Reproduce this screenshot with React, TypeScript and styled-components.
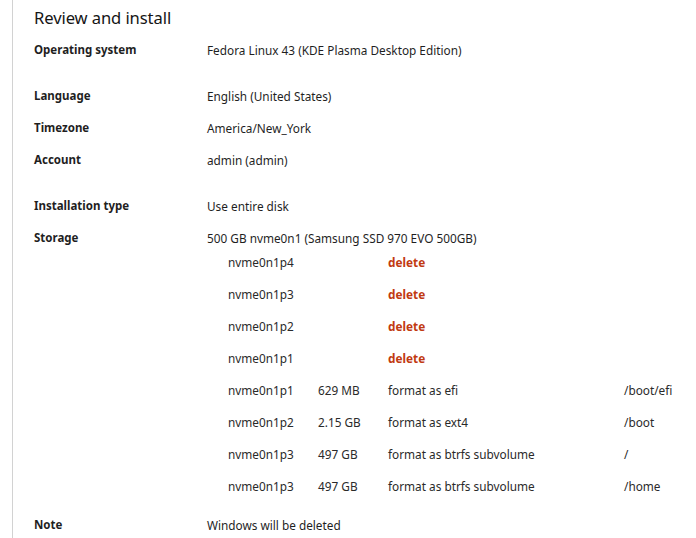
import React from "react";
import styled, { createGlobalStyle } from "styled-components";

const Global = createGlobalStyle`
  html, body { margin: 0; padding: 0; background: #ffffff; }
  body { font-family: "Noto Sans", "Open Sans", sans-serif; color: #151515; }
`;

const Page = styled.div`
  margin-left: 12px;
  border-left: 1px solid #d2d2d2;
  padding-left: 21px;
  min-height: 538px;
  box-sizing: border-box;
  overflow: hidden;
`;

const Title = styled.h1`
  margin: 0;
  height: 34px;
  display: flex;
  align-items: center;
  font-size: 16.6px;
  font-weight: 400;
  color: #151515;
  letter-spacing: -0.1px;
`;

const Group = styled.div<{ $gap: number }>`
  margin-top: ${(p) => p.$gap}px;
`;

const Row = styled.div`
  display: grid;
  grid-template-columns: 173px 1fr;
  padding: 7px 0;
  font-size: 11.8px;
  line-height: 18px;
`;

const Label = styled.div`
  font-weight: 700;
  font-size: 11.5px;
  color: #1f1f1f;
`;

const Value = styled.div`
  color: #1f1f1f;
`;

const Parts = styled.div`
  display: grid;
  grid-template-columns: 90px 70px 236px auto;
  padding-left: 21px;
  margin-top: -1px;
`;

const Cell = styled.div<{ $danger?: boolean }>`
  height: 32px;
  display: flex;
  align-items: center;
  white-space: nowrap;
  color: ${(p) => (p.$danger ? "#c13a12" : "#2a2a2a")};
  font-weight: ${(p) => (p.$danger ? 700 : 400)};
`;

const partitions = [
  ["nvme0n1p4", "", "delete", ""],
  ["nvme0n1p3", "", "delete", ""],
  ["nvme0n1p2", "", "delete", ""],
  ["nvme0n1p1", "", "delete", ""],
  ["nvme0n1p1", "629 MB", "format as efi", "/boot/efi"],
  ["nvme0n1p2", "2.15 GB", "format as ext4", "/boot"],
  ["nvme0n1p3", "497 GB", "format as btrfs subvolume", "/"],
  ["nvme0n1p3", "497 GB", "format as btrfs subvolume", "/home"],
];

export default function App() {
  return (
    <>
      <Global />
      <Page>
        <Title>Review and install</Title>
        <Row>
          <Label>Operating system</Label>
          <Value>Fedora Linux 43 (KDE Plasma Desktop Edition)</Value>
        </Row>
        <Group $gap={14}>
          <Row>
            <Label>Language</Label>
            <Value>English (United States)</Value>
          </Row>
          <Row>
            <Label>Timezone</Label>
            <Value>America/New_York</Value>
          </Row>
          <Row>
            <Label>Account</Label>
            <Value>admin (admin)</Value>
          </Row>
        </Group>
        <Group $gap={14}>
          <Row>
            <Label>Installation type</Label>
            <Value>Use entire disk</Value>
          </Row>
          <Row>
            <Label>Storage</Label>
            <Value>
              500 GB nvme0n1 (Samsung SSD 970 EVO 500GB)
              <Parts>
                {partitions.map((p, i) => (
                  <React.Fragment key={i}>
                    <Cell>{p[0]}</Cell>
                    <Cell>{p[1]}</Cell>
                    <Cell $danger={p[2] === "delete"}>{p[2]}</Cell>
                    <Cell>{p[3]}</Cell>
                  </React.Fragment>
                ))}
              </Parts>
            </Value>
          </Row>
          <Row>
            <Label>Note</Label>
            <Value>Windows will be deleted</Value>
          </Row>
        </Group>
      </Page>
    </>
  );
}
